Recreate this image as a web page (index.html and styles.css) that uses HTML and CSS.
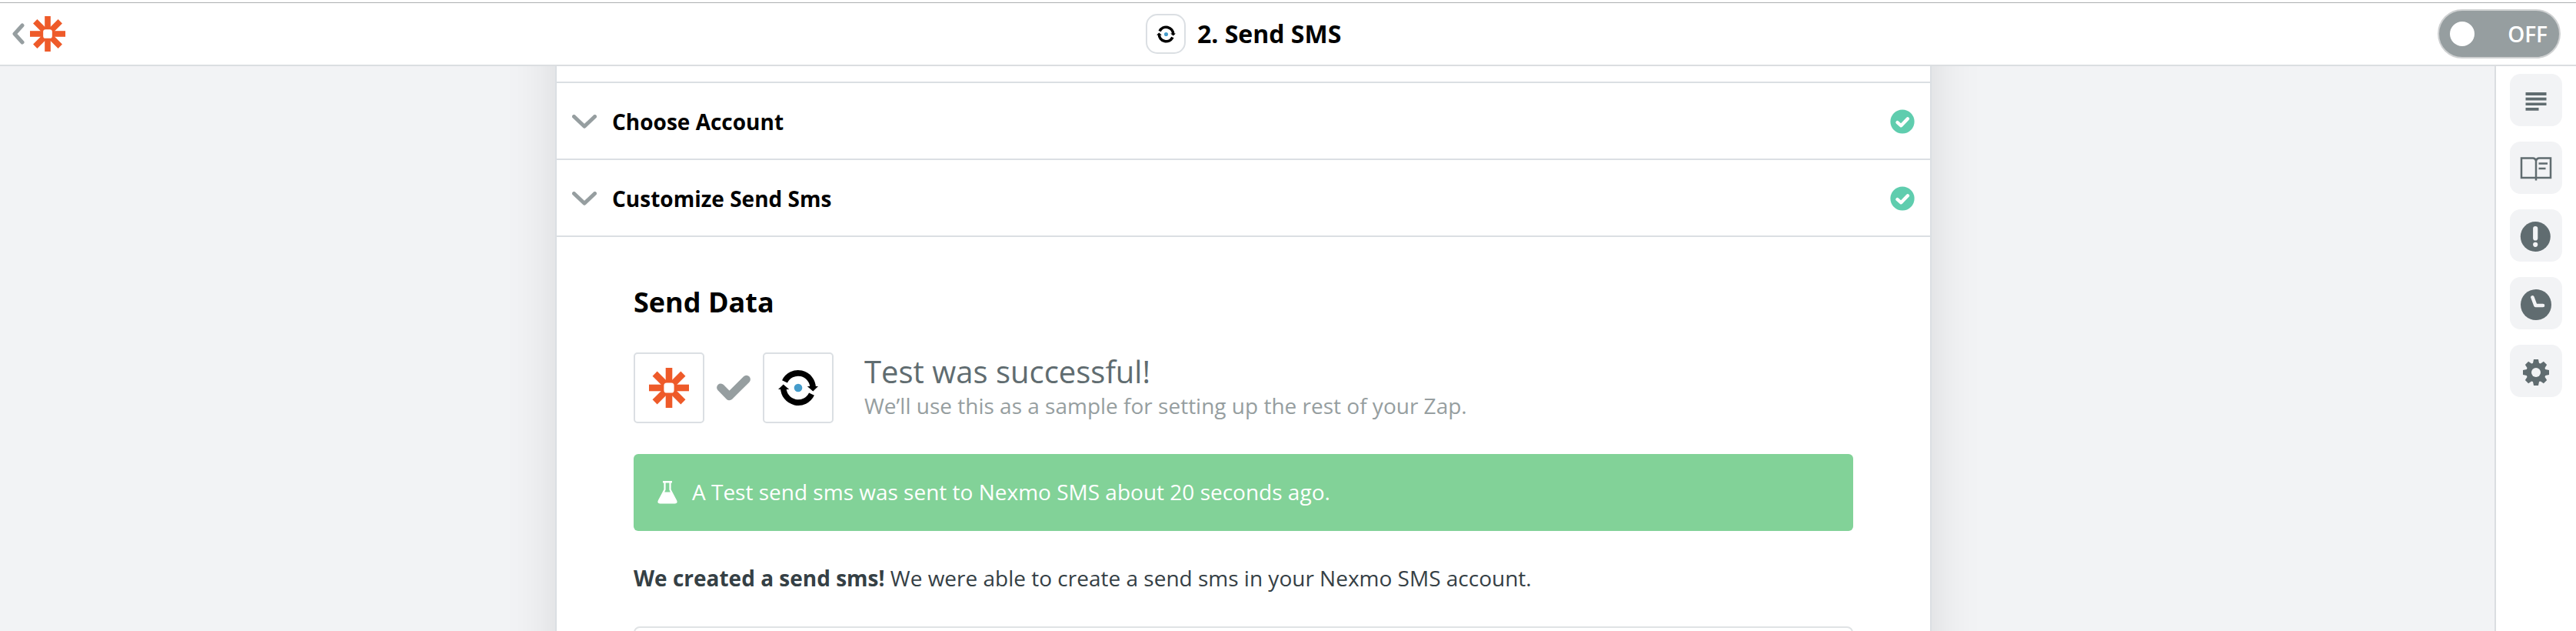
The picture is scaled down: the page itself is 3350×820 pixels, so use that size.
FILE: index.html
```html
<!DOCTYPE html>
<html lang="en">
<head>
<meta charset="utf-8">
<title>Send SMS</title>
<link rel="stylesheet" href="styles.css">
</head>
<body>
<svg class="defs" width="0" height="0">
  <symbol id="zap" viewBox="-26 -26 52 52">
    <g fill="#ee5a29">
      <rect x="-4.3" y="-26" width="8.6" height="52"/>
      <rect x="-26" y="-4.3" width="52" height="8.6"/>
      <rect x="-4.3" y="-26" width="8.6" height="52" transform="rotate(45)"/>
      <rect x="-4.3" y="-26" width="8.6" height="52" transform="rotate(-45)"/>
    </g>
    <rect x="-6.6" y="-6.6" width="13.2" height="13.2" rx="3.6" fill="#fff"/>
  </symbol>
  <symbol id="nexmo" viewBox="-26 -24 52 48">
    <g fill="none" stroke="#000" stroke-width="7.6">
      <path d="M-17.5-8.2A19.3 19.3 0 0 1 19.2 0"/>
      <path d="M17.5 8.2A19.3 19.3 0 0 1-19.2 0"/>
    </g>
    <path d="M11.8-2H26L19.3 4.4ZM-11.8 2H-26L-19.3-4.4Z"/>
    <circle r="5.3" fill="#459ccb"/>
  </symbol>
</svg>

<header class="topbar">
  <div class="topbar-left">
    <svg class="back" viewBox="0 0 16 28"><path d="M13 3 3 14l10 11"/></svg>
    <svg class="logo"><use href="#zap"/></svg>
  </div>
  <div class="topbar-title">
    <span class="app-icon"><svg><use href="#nexmo"/></svg></span>
    <h1>2. Send SMS</h1>
  </div>
  <button class="toggle"><span class="knob"></span><span>OFF</span></button>
</header>

<div class="workspace">
  <main class="canvas">
    <div class="card">
      <div class="row row-cut"></div>
      <div class="row">
        <svg class="chevron" viewBox="0 0 32 18"><path d="M2.5 2.5 16 15.3 29.5 2.5"/></svg>
        <h2>Choose Account</h2>
        <svg class="done" viewBox="0 0 32 32"><circle cx="16" cy="16" r="15.6"/><path d="m9.5 17.2 4.8 4.1 8.6-9"/></svg>
      </div>
      <div class="row">
        <svg class="chevron" viewBox="0 0 32 18"><path d="M2.5 2.5 16 15.3 29.5 2.5"/></svg>
        <h2>Customize Send Sms</h2>
        <svg class="done" viewBox="0 0 32 32"><circle cx="16" cy="16" r="15.6"/><path d="m9.5 17.2 4.8 4.1 8.6-9"/></svg>
      </div>
      <section class="content">
        <h3>Send Data</h3>
        <div class="result">
          <span class="tile"><svg class="tile-zap"><use href="#zap"/></svg></span>
          <svg class="tick" viewBox="0 0 44 34"><path d="M5.3 16.6 16.5 28 38.7 6"/></svg>
          <span class="tile"><svg class="tile-nexmo"><use href="#nexmo"/></svg></span>
          <div class="result-text">
            <p class="result-title">Test was successful!</p>
            <p class="result-sub">We’ll use this as a sample for setting up the rest of your Zap.</p>
          </div>
        </div>
        <div class="banner">
          <svg class="flask" viewBox="0 0 26 30"><path fill-rule="evenodd" d="M7 0H19V2.5H17.6V11L25 25Q27 29.5 22.5 29.5H3.5Q-1 29.5 1 25L8.400 11V2.500H7ZM10.600 2.500V11.500L9.200 14.500H16.800L15.400 11.500V2.500Z"/></svg>
          <span>A Test send sms was sent to Nexmo SMS about 20 seconds ago.</span>
        </div>
        <p class="summary"><strong>We created a send sms!</strong> We were able to create a send sms in your Nexmo SMS account.</p>
        <div class="sample"></div>
      </section>
    </div>
  </main>

  <aside class="sidebar">
    <button><svg viewBox="0 0 68 68"><path d="M20.500 24h27v4h-27zm0 6.800h27v3.700h-27zm0 6.600h27v3.600h-27zm0 6.700h17v3.600h-17z"/></svg></button>
    <button><svg viewBox="0 0 68 68"><g fill="none" stroke="#606c70" stroke-width="2.500"><path d="M34 50.500V25Q33 21.500 30 21.500H15V47H53V21.500H38Q35 21.500 34 25"/><path d="M37.500 28.500H49M37.500 35H46.500"/></g></svg></button>
    <button><svg viewBox="0 0 68 68"><circle cx="33.300" cy="35.500" r="19.500"/><path class="cut" d="M33.200 25V37.500"/><circle cx="33.200" cy="45.800" r="3.100" fill="#f2f3f5"/></svg></button>
    <button><svg viewBox="0 0 68 68"><circle cx="34" cy="36" r="20"/><path class="hands" d="M29.400 26.300 33.400 37H43"/></svg></button>
    <button><svg viewBox="-34 -36 68 68">
      <circle r="12.800"/>
      <g id="teeth"><path id="tooth" d="M-4.200-11-3-17H3L4.200-11V11L3 17H-3L-4.200 11Z"/><use href="#tooth" transform="rotate(90)"/></g>
      <use href="#teeth" transform="rotate(45)"/>
      <circle r="6" fill="#f2f3f5"/>
    </svg></button>
  </aside>
</div>
</body>
</html>
```

FILE: styles.css
```css
* { box-sizing: border-box; }

body {
  margin: 0;
  height: 820px;
  overflow: hidden;
  display: flex;
  flex-direction: column;
  background: #fff;
  font-family: "Open Sans", "Noto Sans", sans-serif;
  font-size: 28px;
  color: #354045;
}

h1, h2, h3, p { margin: 0; }
svg { display: block; flex: none; }
.defs { position: absolute; }

button {
  border: 0;
  padding: 0;
  font: inherit;
}

.topbar {
  flex: none;
  height: 83px;
  margin-top: 3px;
  border-top: 1px solid #adb0b2;
  border-bottom: 2px solid #dbdee1;
  display: grid;
  grid-template-columns: 1490px 1fr auto;
  align-items: center;
}

.topbar-left {
  display: flex;
  align-items: center;
  gap: 7px;
  padding-left: 16px;
}

.back { width: 16px; height: 28px; }
.back path, .chevron path {
  fill: none;
  stroke: #969ea0;
  stroke-width: 5;
  stroke-linecap: round;
  stroke-linejoin: round;
}
.logo { width: 46px; height: 46px; }

.topbar-title {
  display: flex;
  align-items: center;
  gap: 15px;
  color: #000;
}
.topbar-title h1 { font-size: 32px; font-weight: 700; line-height: 44px; }

.app-icon {
  width: 52px;
  height: 52px;
  border: 2px solid #dbdfe3;
  border-radius: 15px;
  display: grid;
  place-items: center;
}
.app-icon svg { width: 25px; height: 23px; }

.toggle {
  width: 160px;
  height: 64px;
  margin-right: 20px;
  border: 2px solid #cfd1d2;
  border-radius: 32px;
  background: #969ea0;
  color: #fff;
  font-weight: 600;
  padding: 0 15px 0 14px;
  display: flex;
  align-items: center;
  justify-content: space-between;
}
.knob { width: 32px; height: 32px; border-radius: 50%; background: #fff; }

.workspace { flex: 1; min-height: 0; display: flex; }

.canvas {
  flex: 1;
  overflow: hidden;
  padding-left: 722px;
  background: #f2f3f5;
}

/* The card is scrolled: its top edge sits above the visible canvas. */
.card {
  width: 1790px;
  height: 1000px;
  margin-top: -100px;
  background: #fff;
  border: solid #dbdfe3;
  border-width: 0 2px;
  box-shadow: 0 0 64px rgba(0, 0, 0, 0.11);
}

.row {
  height: 100px;
  border-bottom: 2px solid #dbdfe3;
  padding: 0 20px;
  display: flex;
  align-items: center;
}
.row-cut { height: 122px; }
.row h2 {
  flex: 1;
  margin-left: 20px;
  padding-top: 2px;
  color: #000;
  font-size: 28px;
  font-weight: 700;
  line-height: 40px;
}
.chevron { width: 32px; height: 18px; margin-top: 2px; }
.done { width: 32px; height: 32px; margin-top: 2px; }
.done circle { fill: #5fcdae; }
.done path {
  fill: none;
  stroke: #fff;
  stroke-width: 4.400;
  stroke-linecap: round;
  stroke-linejoin: round;
}

.content { padding: 61px 100px 0; }
.content h3 { color: #000; font-size: 36px; font-weight: 700; line-height: 48px; }

.result {
  display: flex;
  align-items: center;
  margin-top: 41px;
  height: 92px;
}
.tile {
  width: 92px;
  height: 92px;
  border: 2px solid #dbdfe3;
  border-radius: 5px;
  display: grid;
  place-items: center;
}
.tile-zap { width: 52px; height: 52px; }
.tile-nexmo { width: 52px; height: 48px; }
.tick { width: 44px; height: 34px; margin: 0 16px; }
.tick path {
  fill: none;
  stroke: #969ea0;
  stroke-width: 10.400;
  stroke-linecap: round;
  stroke-linejoin: round;
}
.result-text { margin-left: 40px; align-self: flex-start; }
.result-title { font-size: 40px; line-height: 50px; color: #606c70; }
.result-sub { line-height: 38px; color: #969ea0; }

.banner {
  height: 100px;
  margin-top: 40px;
  padding-left: 31px;
  border-radius: 6px;
  background: #82d298;
  color: #fff;
  display: flex;
  align-items: center;
  gap: 19px;
}
.banner span { padding-bottom: 2px; }
.flask { width: 26px; height: 30px; fill: #fff; }

.summary { margin-top: 40px; line-height: 42px; }
.summary strong { font-weight: 700; }

.sample {
  height: 100px;
  margin-top: 42px;
  border: 2px solid #e0e3e5;
  border-radius: 8px;
}

.sidebar {
  width: 106px;
  border-left: 2px solid #dbdee1;
  background: #fff;
  padding: 10px 18px;
  display: flex;
  flex-direction: column;
  gap: 20px;
}
.sidebar button {
  width: 68px;
  height: 68px;
  border-radius: 14px;
  background: #f2f3f5;
}
.sidebar svg { width: 68px; height: 68px; fill: #606c70; }
.sidebar .cut, .sidebar .hands {
  fill: none;
  stroke: #f2f3f5;
  stroke-width: 6.200;
  stroke-linecap: round;
  stroke-linejoin: round;
}
.sidebar .hands { stroke-width: 4.600; }
```
